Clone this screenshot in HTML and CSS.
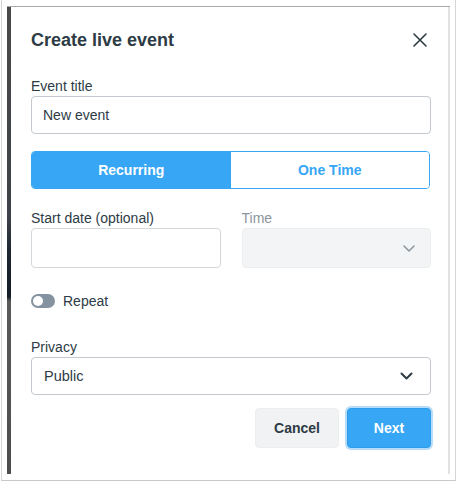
FILE: index.html
```html
<!DOCTYPE html>
<html>
<head>
<meta charset="utf-8">
<title>Create live event</title>
<link rel="stylesheet" href="styles.css">
</head>
<body>
<div class="shot">
  <div class="backdrop">
    <div class="strip"></div>
    <div class="modal">
      <div class="header">
        <h1 class="title">Create live event</h1>
        <button class="close" aria-label="Close">
          <svg width="14" height="14" viewBox="0 0 14 14"><path d="M1 1 L13 13 M13 1 L1 13" stroke="#2d3b45" stroke-width="1.6" fill="none" stroke-linecap="round"/></svg>
        </button>
      </div>

      <div class="field field-title">
        <div class="label">Event title</div>
        <div class="input">New event</div>
      </div>

      <div class="segmented">
        <div class="seg seg-active">Recurring</div>
        <div class="seg">One Time</div>
      </div>

      <div class="row-two">
        <div class="field">
          <div class="label">Start date (optional)</div>
          <div class="input input-date"></div>
        </div>
        <div class="field">
          <div class="label label-muted">Time</div>
          <div class="input input-disabled">
            <svg width="12" height="7" viewBox="0 0 12 7"><polyline points="1,1 6,6 11,1" stroke="#8b969e" stroke-width="1.5" fill="none" stroke-linecap="round" stroke-linejoin="round"/></svg>
          </div>
        </div>
      </div>

      <div class="toggle-row">
        <span class="toggle"><span class="knob"></span></span>
        <span class="toggle-text">Repeat</span>
      </div>

      <div class="field">
        <div class="label">Privacy</div>
        <div class="input input-select">
          <span>Public</span>
          <svg width="13" height="8" viewBox="0 0 13 8"><polyline points="1.5,1.5 6.5,6.5 11.5,1.5" stroke="#2d3b45" stroke-width="2" fill="none" stroke-linecap="round" stroke-linejoin="round"/></svg>
        </div>
      </div>

      <div class="actions">
        <button class="btn btn-cancel">Cancel</button>
        <button class="btn btn-next">Next</button>
      </div>
    </div>
  </div>
</div>
</body>
</html>
```

FILE: styles.css
```css
* { box-sizing: border-box; }

html, body {
  margin: 0;
  padding: 0;
  background: #ffffff;
  font-family: "Liberation Sans", Arial, Helvetica, sans-serif;
  color: #2d3b45;
}

.shot {
  margin-left: 1px;
  width: 455px;
  height: 481px;
  border-left: 1px solid #d6d6d6;
  border-right: 1px solid #d6d6d6;
  border-bottom: 1px solid #c9c9c9;
  padding-top: 6px;
  padding-left: 5px;
}

.backdrop {
  display: flex;
  width: 443px;
  height: 468px;
  border-top: 1px solid #a8a8a8;
}

.strip {
  width: 4px;
  background: linear-gradient(to bottom, #4a4a4a 0%, #3e4248 45%, #1f2631 52%, #161c27 62%, #5a5a5a 63%, #4d4d4d 100%);
}

.modal {
  flex: 1;
  background: #ffffff;
  border-right: 2px solid #e2e2e2;
  padding: 21px 17px 0 20px;
  display: flex;
  flex-direction: column;
}

.header {
  display: flex;
  justify-content: space-between;
  align-items: center;
  height: 24px;
}

.title {
  margin: 0;
  font-size: 18px;
  line-height: 24px;
  font-weight: 700;
  color: #2d3b45;
}

.close {
  width: 24px;
  height: 24px;
  border: 0;
  background: none;
  padding: 0;
  display: flex;
  align-items: center;
  justify-content: center;
  margin-right: -1px;
}

.field {
  display: flex;
  flex-direction: column;
}

.field-title {
  margin-top: 24px;
}

.label {
  font-size: 14px;
  line-height: 20px;
  color: #2d3b45;
}

.label-muted {
  color: #8b969e;
}

.input {
  height: 38px;
  border: 1px solid #c3c9ce;
  border-radius: 4px;
  padding: 0 11px;
  font-size: 14px;
  display: flex;
  align-items: center;
  color: #2d3b45;
}

.segmented {
  margin-top: 17px;
  display: flex;
  height: 38px;
  border: 1px solid #37a6f5;
  border-radius: 4px;
  overflow: hidden;
  margin-right: 1px;
}

.seg {
  flex: 1;
  display: flex;
  align-items: center;
  justify-content: center;
  font-size: 14px;
  font-weight: 700;
  color: #37a6f5;
  background: #ffffff;
}

.seg-active {
  background: #37a6f5;
  color: #ffffff;
}

.row-two {
  margin-top: 20px;
  display: grid;
  grid-template-columns: 1fr 1fr;
  column-gap: 21px;
}

.row-two .label {
  line-height: 19px;
}

.input-date {
  height: 40px;
  border-color: #d3d8dc;
}

.input-disabled {
  height: 40px;
  background: #f2f4f5;
  border-color: #eceff0;
  justify-content: flex-end;
  padding-right: 15px;
}

.toggle-row {
  margin-top: 23px;
  height: 20px;
  display: flex;
  align-items: center;
  gap: 8px;
}

.toggle {
  width: 24px;
  height: 14px;
  border-radius: 7px;
  background: #8593a0;
  display: flex;
  align-items: center;
  padding: 0 2px;
}

.knob {
  width: 10px;
  height: 10px;
  border-radius: 50%;
  background: #ffffff;
}

.toggle-text {
  font-size: 14px;
  color: #2d3b45;
}

.toggle-row + .field {
  margin-top: 26px;
}

.input-select {
  justify-content: space-between;
  padding-left: 12px;
  padding-right: 17px;
  font-size: 14.5px;
}

.actions {
  margin-top: 13px;
  display: flex;
  justify-content: flex-end;
  gap: 8px;
}

.btn {
  height: 40px;
  border-radius: 4px;
  font-family: "Liberation Sans", Arial, Helvetica, sans-serif;
  font-size: 14px;
  font-weight: 700;
  padding: 0;
}

.btn-cancel {
  width: 84px;
  background: #f0f2f3;
  border: 1px solid #eceff0;
  color: #2d3b45;
}

.btn-next {
  width: 84px;
  background: #37a6f5;
  border: 1px solid #2d9cea;
  color: #ffffff;
  box-shadow: 0 0 0 2px #b6dcfa;
}
```
